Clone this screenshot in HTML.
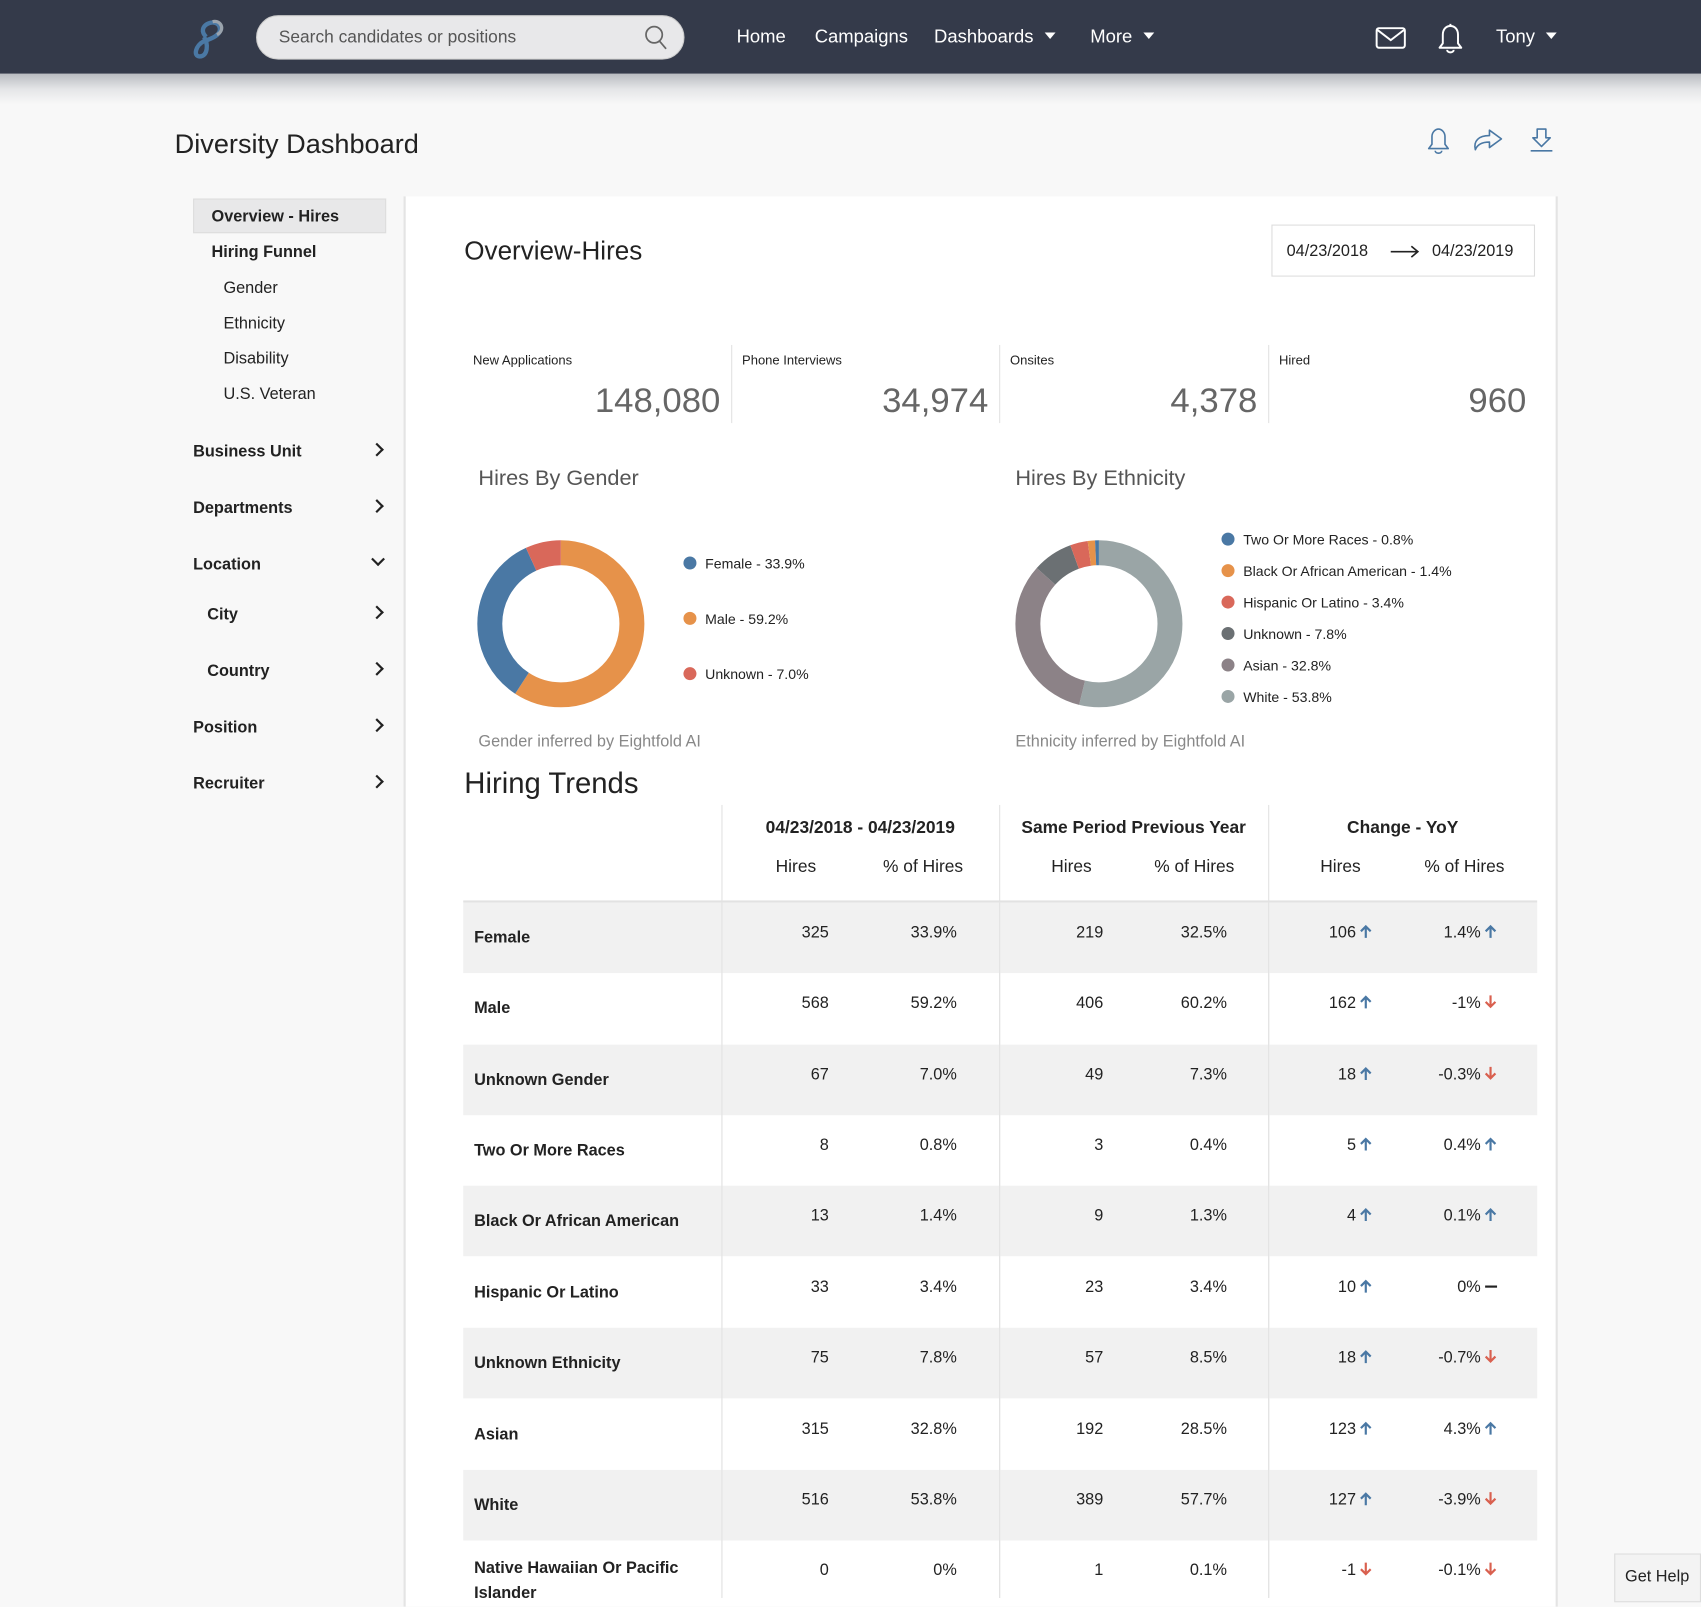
<!DOCTYPE html>
<html><head><meta charset="utf-8">
<style>
*{margin:0;padding:0;box-sizing:border-box}
html,body{width:1701px;height:1598px;overflow:hidden;background:#f8f8f8}
#w{position:absolute;left:0;top:0;width:1568px;height:1473px;transform:scale(1.08482);transform-origin:0 0;font-family:"Liberation Sans",sans-serif;color:#222}
.t{position:absolute;white-space:nowrap;line-height:20px}
.b{font-weight:bold}
.r{text-align:right}
.hdr{position:absolute;left:0;top:0;width:1568px;height:68px;background:#343a4a}
.sh{position:absolute;left:0;top:68px;width:1568px;height:28px;background:linear-gradient(#b9bcc1,#e4e5e7 50%,#f8f8f8)}
.nav{color:#fff;font-size:17px;top:24px}
.caret{display:inline-block;width:0;height:0;border-left:5px solid transparent;border-right:5px solid transparent;border-top:6px solid #fff;margin-left:10px;vertical-align:3px}
.panel{position:absolute;left:372px;top:181px;width:1064px;height:1300px;background:#fff;border-left:2px solid #e4e4e4;border-right:2px solid #e4e4e4}
.row{position:absolute;left:427px;width:990px;height:65px}
.g{background:#f1f1f1}
.num{position:absolute;font-size:15px;top:19px;text-align:right;white-space:nowrap}
.lab{position:absolute;left:10px;top:24px;font-size:15px;font-weight:bold;white-space:nowrap}
.up,.dn{display:inline-block;width:12px;height:13px;margin-left:3px;vertical-align:-1px}
.dash{display:inline-block;width:11px;height:2px;background:#222;margin-left:4px;vertical-align:4px}
.vl{position:absolute;width:1px;background:#e2e2e2}
.chev{position:absolute;width:9px;height:9px;border-right:2px solid #222;border-top:2px solid #222;transform:rotate(45deg)}
.lg{position:absolute;font-size:13px;white-space:nowrap;line-height:16px}
.lg i{display:inline-block;width:12px;height:12px;border-radius:6px;vertical-align:-1px;margin-right:8px}
</style></head><body><div id="w">
<svg width="0" height="0" style="position:absolute"><defs>
<symbol id="au" viewBox="0 0 12 13"><path d="M6 12.5 V2 M1.5 6.5 L6 2 L10.5 6.5" fill="none" stroke="#4a78a4" stroke-width="2"/></symbol>
<symbol id="ad" viewBox="0 0 12 13"><path d="M6 0.5 V11 M1.5 6.5 L6 11 L10.5 6.5" fill="none" stroke="#d9604f" stroke-width="2"/></symbol>
</defs></svg>
<div class="hdr"></div><div class="sh"></div>
<svg style="position:absolute;left:168px;top:14px" width="44" height="42" viewBox="0 0 44 42"><path d="M22 20 C12 10 30 2 34 10 C38 18 26 22 20 24 C12 28 10 38 16 38 C24 38 24 26 20 20" fill="none" stroke="#4a78a4" stroke-width="4"/><path d="M28 6 C36 4 40 14 32 18" fill="none" stroke="#9aa3ad" stroke-width="3"/></svg>
<div style="position:absolute;left:236px;top:14px;width:395px;height:41px;border-radius:21px;background:#e8e8ea;border:1px solid #ccc"></div>
<div class="t" style="left:257px;top:25px;font-size:16px;color:#555">Search candidates or positions</div>
<svg style="position:absolute;left:594px;top:23px" width="22" height="24" viewBox="0 0 22 24"><circle cx="9" cy="9" r="7.5" fill="none" stroke="#666" stroke-width="1.6"/><path d="M14 15 L20 22" stroke="#666" stroke-width="1.6"/></svg>
<div class="t nav" style="left:679px">Home</div>
<div class="t nav" style="left:751px">Campaigns</div>
<div class="t nav" style="left:861px">Dashboards<span class="caret"></span></div>
<div class="t nav" style="left:1005px">More<span class="caret"></span></div>
<svg style="position:absolute;left:1267px;top:23px" width="30" height="24" viewBox="0 0 30 24"><rect x="2" y="3" width="26" height="18" rx="2" fill="none" stroke="#fff" stroke-width="1.8"/><path d="M2 4 L15 14 L28 4" fill="none" stroke="#fff" stroke-width="1.8"/></svg>
<svg style="position:absolute;left:1323px;top:20px" width="28" height="32" viewBox="0 0 28 32"><path d="M4 24 L24 24 L21 20 L21 12 C21 7 18 4 14 4 C10 4 7 7 7 12 L7 20 Z" fill="none" stroke="#fff" stroke-width="1.8" stroke-linejoin="round"/><path d="M11 26 C11 29 17 29 17 26" fill="none" stroke="#fff" stroke-width="1.8"/><path d="M14 2 L14 4" stroke="#fff" stroke-width="1.8"/></svg>
<div class="t nav" style="left:1379px">Tony<span class="caret"></span></div>

<div class="t" style="left:161px;top:118px;font-size:25px;line-height:30px;color:#222">Diversity Dashboard</div>
<svg style="position:absolute;left:1313px;top:116px" width="26" height="28" viewBox="0 0 26 28"><path d="M4 21 L22 21 L19 17 L19 10 C19 6 16 3 13 3 C10 3 7 6 7 10 L7 17 Z" fill="none" stroke="#4a78a4" stroke-width="1.5" stroke-linejoin="round"/><path d="M10 23 C10 26 16 26 16 23" fill="none" stroke="#4a78a4" stroke-width="1.5"/></svg>
<svg style="position:absolute;left:1357px;top:116px" width="30" height="26" viewBox="0 0 30 26"><path d="M3 22 C1 14 6 9 16 9 L16 4 L27 12 L16 20 L16 15 C9 15 5 17 3 22 Z" fill="none" stroke="#4a78a4" stroke-width="1.5" stroke-linejoin="round"/></svg>
<svg style="position:absolute;left:1408px;top:116px" width="26" height="28" viewBox="0 0 26 28"><path d="M9 3 L17 3 L17 11 L21 11 L13 19 L5 11 L9 11 Z" fill="none" stroke="#4a78a4" stroke-width="1.5" stroke-linejoin="round"/><path d="M3 23 L23 23" stroke="#4a78a4" stroke-width="1.5"/></svg>

<div style="position:absolute;left:178px;top:183px;width:178px;height:32px;background:#e8e8e9;border:1px solid #ddd"></div>
<div class="t b" style="left:195px;top:190px;font-size:15px">Overview - Hires</div>
<div class="t b" style="left:195px;top:223px;font-size:15px">Hiring Funnel</div>
<div class="t" style="left:206px;top:256px;font-size:15px">Gender</div>
<div class="t" style="left:206px;top:289px;font-size:15px">Ethnicity</div>
<div class="t" style="left:206px;top:321px;font-size:15px">Disability</div>
<div class="t" style="left:206px;top:354px;font-size:15px">U.S. Veteran</div>
<div class="t b" style="left:178px;top:407px;font-size:15px">Business Unit</div><div class="chev" style="left:343px;top:410px"></div>
<div class="t b" style="left:178px;top:459px;font-size:15px">Departments</div><div class="chev" style="left:343px;top:462px"></div>
<div class="t b" style="left:178px;top:511px;font-size:15px">Location</div><div class="chev" style="left:344px;top:511px;transform:rotate(135deg)"></div>
<div class="t b" style="left:191px;top:557px;font-size:15px">City</div><div class="chev" style="left:343px;top:560px"></div>
<div class="t b" style="left:191px;top:609px;font-size:15px">Country</div><div class="chev" style="left:343px;top:612px"></div>
<div class="t b" style="left:178px;top:661px;font-size:15px">Position</div><div class="chev" style="left:343px;top:664px"></div>
<div class="t b" style="left:178px;top:713px;font-size:15px">Recruiter</div><div class="chev" style="left:343px;top:716px"></div>

<div class="panel"></div>
<div class="t" style="left:428px;top:217px;font-size:24px;line-height:30px">Overview-Hires</div>
<div style="position:absolute;left:1172px;top:207px;width:243px;height:48px;border:1px solid #ddd;background:#fff"></div>
<div class="t" style="left:1186px;top:222px;font-size:15px">04/23/2018</div>
<svg style="position:absolute;left:1281px;top:225px" width="28" height="14" viewBox="0 0 28 14"><path d="M1 7 L26 7 M20 2 L26 7 L20 12" fill="none" stroke="#222" stroke-width="1.5"/></svg>
<div class="t" style="left:1320px;top:222px;font-size:15px">04/23/2019</div>

<div class="t" style="left:436px;top:322px;font-size:12px">New Applications</div>
<div class="t" style="left:684px;top:322px;font-size:12px">Phone Interviews</div>
<div class="t" style="left:931px;top:322px;font-size:12px">Onsites</div>
<div class="t" style="left:1179px;top:322px;font-size:12px">Hired</div>
<div class="vl" style="left:674px;top:318px;height:72px"></div>
<div class="vl" style="left:921px;top:318px;height:72px"></div>
<div class="vl" style="left:1169px;top:318px;height:72px"></div>
<div class="t r" style="left:464px;width:200px;top:350px;font-size:32px;line-height:38px;color:#666">148,080</div>
<div class="t r" style="left:711px;width:200px;top:350px;font-size:32px;line-height:38px;color:#666">34,974</div>
<div class="t r" style="left:959px;width:200px;top:350px;font-size:32px;line-height:38px;color:#666">4,378</div>
<div class="t r" style="left:1207px;width:200px;top:350px;font-size:32px;line-height:38px;color:#666">960</div>

<div class="t" style="left:441px;top:429px;font-size:20px;line-height:24px;color:#555">Hires By Gender</div>
<div class="t" style="left:936px;top:429px;font-size:20px;line-height:24px;color:#555">Hires By Ethnicity</div>
<svg style="position:absolute;left:437px;top:495px" width="160" height="160" viewBox="0 0 160 160"><g transform="rotate(-90 80 80)" fill="none" stroke-width="23">
<circle cx="80" cy="80" r="65.5" stroke="#e6924a" stroke-dasharray="243.6 411.5" stroke-dashoffset="0"/>
<circle cx="80" cy="80" r="65.5" stroke="#4a78a4" stroke-dasharray="139.5 411.5" stroke-dashoffset="-243.6"/>
<circle cx="80" cy="80" r="65.5" stroke="#d9685a" stroke-dasharray="28.8 411.5" stroke-dashoffset="-383.1"/></g></svg>
<svg style="position:absolute;left:933px;top:495px" width="160" height="160" viewBox="0 0 160 160"><g transform="rotate(-90 80 80)" fill="none" stroke-width="23">
<circle cx="80" cy="80" r="65.5" stroke="#9aa5a6" stroke-dasharray="221.4 411.5" stroke-dashoffset="0"/>
<circle cx="80" cy="80" r="65.5" stroke="#8c8287" stroke-dasharray="135 411.5" stroke-dashoffset="-221.4"/>
<circle cx="80" cy="80" r="65.5" stroke="#6b7073" stroke-dasharray="32.1 411.5" stroke-dashoffset="-356.4"/>
<circle cx="80" cy="80" r="65.5" stroke="#d9685a" stroke-dasharray="14 411.5" stroke-dashoffset="-388.5"/>
<circle cx="80" cy="80" r="65.5" stroke="#e6924a" stroke-dasharray="5.8 411.5" stroke-dashoffset="-402.5"/>
<circle cx="80" cy="80" r="65.5" stroke="#4a78a4" stroke-dasharray="3.3 411.5" stroke-dashoffset="-408.3"/></g></svg>
<div class="lg" style="left:630px;top:512px"><i style="background:#4a78a4"></i>Female - 33.9%</div>
<div class="lg" style="left:630px;top:563px"><i style="background:#e6924a"></i>Male - 59.2%</div>
<div class="lg" style="left:630px;top:614px"><i style="background:#d9685a"></i>Unknown - 7.0%</div>
<div class="lg" style="left:1126px;top:490px"><i style="background:#4a78a4"></i>Two Or More Races - 0.8%</div>
<div class="lg" style="left:1126px;top:519px"><i style="background:#e6924a"></i>Black Or African American - 1.4%</div>
<div class="lg" style="left:1126px;top:548px"><i style="background:#d9685a"></i>Hispanic Or Latino - 3.4%</div>
<div class="lg" style="left:1126px;top:577px"><i style="background:#6b7073"></i>Unknown - 7.8%</div>
<div class="lg" style="left:1126px;top:606px"><i style="background:#8c8287"></i>Asian - 32.8%</div>
<div class="lg" style="left:1126px;top:635px"><i style="background:#9aa5a6"></i>White - 53.8%</div>
<div class="t" style="left:441px;top:674px;font-size:15px;color:#888">Gender inferred by Eightfold AI</div>
<div class="t" style="left:936px;top:674px;font-size:15px;color:#888">Ethnicity inferred by Eightfold AI</div>

<div class="t" style="left:428px;top:706px;font-size:27px;line-height:32px">Hiring Trends</div>
<div class="vl" style="left:665px;top:742px;height:731px"></div>
<div class="vl" style="left:921px;top:742px;height:731px"></div>
<div class="vl" style="left:1169px;top:742px;height:731px"></div>
<div style="position:absolute;left:427px;top:830px;width:990px;height:2px;background:#e2e2e2"></div>
<div class="t b" style="left:665px;width:256px;text-align:center;top:754px;font-size:16px">04/23/2018 - 04/23/2019</div>
<div class="t b" style="left:921px;width:248px;text-align:center;top:754px;font-size:16px">Same Period Previous Year</div>
<div class="t b" style="left:1169px;width:248px;text-align:center;top:754px;font-size:16px">Change - YoY</div>
<div class="t" style="left:715px;top:790px;font-size:16px">Hires</div>
<div class="t" style="left:814px;top:790px;font-size:16px">% of Hires</div>
<div class="t" style="left:969px;top:790px;font-size:16px">Hires</div>
<div class="t" style="left:1064px;top:790px;font-size:16px">% of Hires</div>
<div class="t" style="left:1217px;top:790px;font-size:16px">Hires</div>
<div class="t" style="left:1313px;top:790px;font-size:16px">% of Hires</div>

<div class="row g" style="top:832px"><span class="lab">Female</span><span class="num" style="right:653px">325</span><span class="num" style="right:535px">33.9%</span><span class="num" style="right:400px">219</span><span class="num" style="right:286px">32.5%</span><span class="num" style="right:152px">106<svg class="up"><use href="#au"/></svg></span><span class="num" style="right:37px">1.4%<svg class="up"><use href="#au"/></svg></span></div>
<div class="row" style="top:897px"><span class="lab">Male</span><span class="num" style="right:653px">568</span><span class="num" style="right:535px">59.2%</span><span class="num" style="right:400px">406</span><span class="num" style="right:286px">60.2%</span><span class="num" style="right:152px">162<svg class="up"><use href="#au"/></svg></span><span class="num" style="right:37px">-1%<svg class="dn"><use href="#ad"/></svg></span></div>
<div class="row g" style="top:963px"><span class="lab">Unknown Gender</span><span class="num" style="right:653px">67</span><span class="num" style="right:535px">7.0%</span><span class="num" style="right:400px">49</span><span class="num" style="right:286px">7.3%</span><span class="num" style="right:152px">18<svg class="up"><use href="#au"/></svg></span><span class="num" style="right:37px">-0.3%<svg class="dn"><use href="#ad"/></svg></span></div>
<div class="row" style="top:1028px"><span class="lab">Two Or More Races</span><span class="num" style="right:653px">8</span><span class="num" style="right:535px">0.8%</span><span class="num" style="right:400px">3</span><span class="num" style="right:286px">0.4%</span><span class="num" style="right:152px">5<svg class="up"><use href="#au"/></svg></span><span class="num" style="right:37px">0.4%<svg class="up"><use href="#au"/></svg></span></div>
<div class="row g" style="top:1093px"><span class="lab">Black Or African American</span><span class="num" style="right:653px">13</span><span class="num" style="right:535px">1.4%</span><span class="num" style="right:400px">9</span><span class="num" style="right:286px">1.3%</span><span class="num" style="right:152px">4<svg class="up"><use href="#au"/></svg></span><span class="num" style="right:37px">0.1%<svg class="up"><use href="#au"/></svg></span></div>
<div class="row" style="top:1159px"><span class="lab">Hispanic Or Latino</span><span class="num" style="right:653px">33</span><span class="num" style="right:535px">3.4%</span><span class="num" style="right:400px">23</span><span class="num" style="right:286px">3.4%</span><span class="num" style="right:152px">10<svg class="up"><use href="#au"/></svg></span><span class="num" style="right:37px">0%<span class="dash"></span></span></div>
<div class="row g" style="top:1224px"><span class="lab">Unknown Ethnicity</span><span class="num" style="right:653px">75</span><span class="num" style="right:535px">7.8%</span><span class="num" style="right:400px">57</span><span class="num" style="right:286px">8.5%</span><span class="num" style="right:152px">18<svg class="up"><use href="#au"/></svg></span><span class="num" style="right:37px">-0.7%<svg class="dn"><use href="#ad"/></svg></span></div>
<div class="row" style="top:1290px"><span class="lab">Asian</span><span class="num" style="right:653px">315</span><span class="num" style="right:535px">32.8%</span><span class="num" style="right:400px">192</span><span class="num" style="right:286px">28.5%</span><span class="num" style="right:152px">123<svg class="up"><use href="#au"/></svg></span><span class="num" style="right:37px">4.3%<svg class="up"><use href="#au"/></svg></span></div>
<div class="row g" style="top:1355px"><span class="lab">White</span><span class="num" style="right:653px">516</span><span class="num" style="right:535px">53.8%</span><span class="num" style="right:400px">389</span><span class="num" style="right:286px">57.7%</span><span class="num" style="right:152px">127<svg class="up"><use href="#au"/></svg></span><span class="num" style="right:37px">-3.9%<svg class="dn"><use href="#ad"/></svg></span></div>
<div class="row" style="top:1420px;height:60px"><span class="lab" style="top:14px;line-height:23px">Native Hawaiian Or Pacific<br>Islander</span><span class="num" style="right:653px">0</span><span class="num" style="right:535px">0%</span><span class="num" style="right:400px">1</span><span class="num" style="right:286px">0.1%</span><span class="num" style="right:152px">-1<svg class="dn"><use href="#ad"/></svg></span><span class="num" style="right:37px">-0.1%<svg class="dn"><use href="#ad"/></svg></span></div>
<div class="vl" style="left:665px;top:832px;height:641px"></div>
<div class="vl" style="left:921px;top:832px;height:641px"></div>
<div class="vl" style="left:1169px;top:832px;height:641px"></div>
<div style="position:absolute;left:1488px;top:1432px;width:80px;height:45px;background:#f3f3f3;border:1px solid #ddd"></div>
<div class="t" style="left:1498px;top:1444px;font-size:15px">Get Help</div>
</div></body></html>
